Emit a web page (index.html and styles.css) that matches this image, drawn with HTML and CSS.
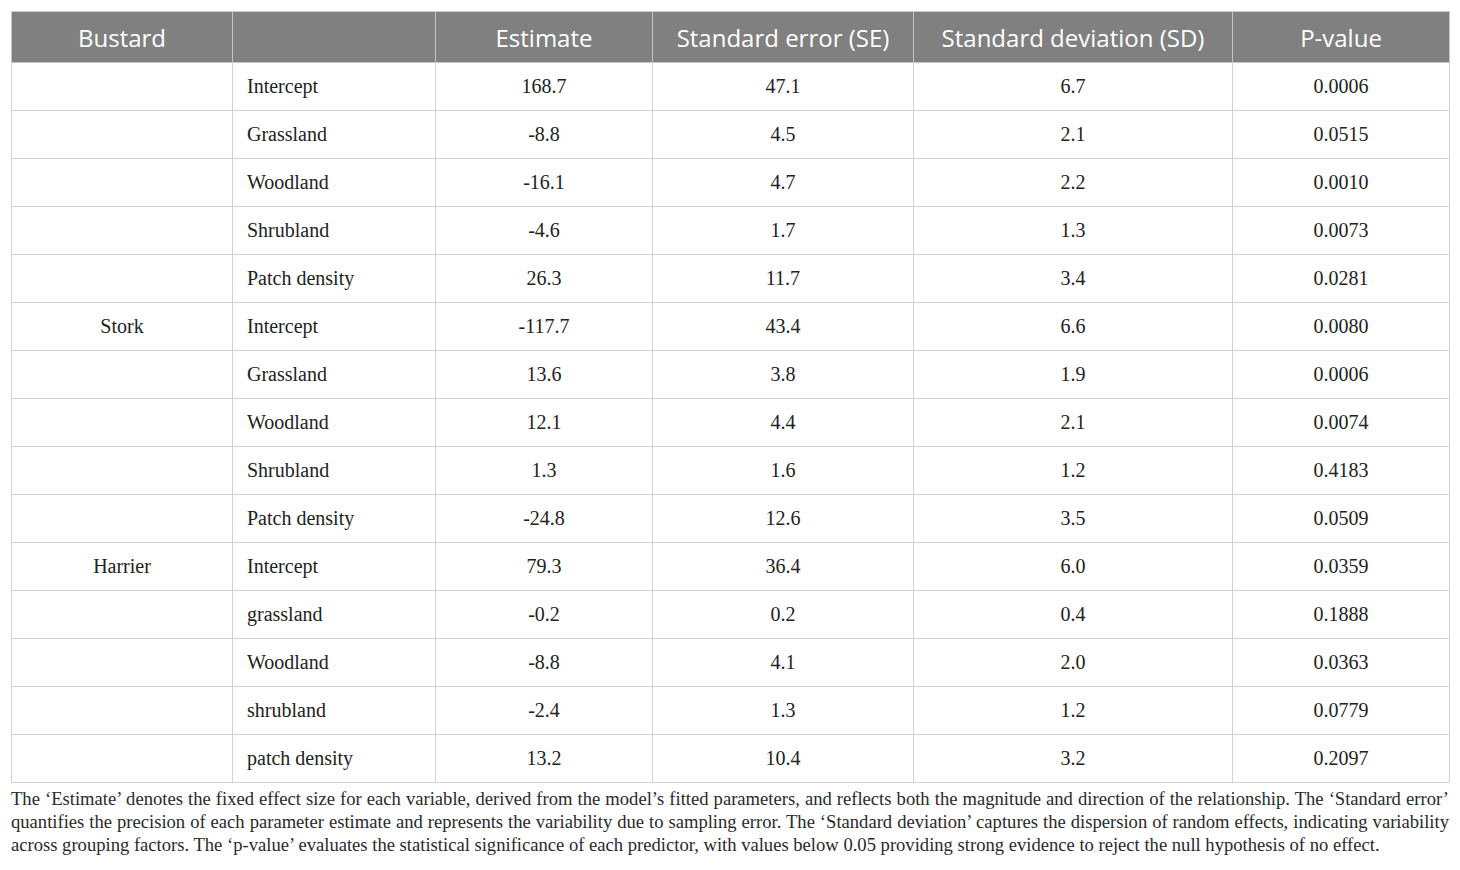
FILE: index.html
```html
<!DOCTYPE html>
<html lang="en">
<head>
    <meta charset="UTF-8">
    <title>Bustard, Stork and Harrier model estimates</title>
    <link rel="stylesheet" href="styles.css">
</head>
<body>
    <table class="results">
        <colgroup>
            <col class="col-species">
            <col class="col-var">
            <col class="col-est">
            <col class="col-se">
            <col class="col-sd">
            <col class="col-p">
        </colgroup>
        <thead>
            <tr>
                <th>Bustard</th>
                <th></th>
                <th>Estimate</th>
                <th>Standard error (SE)</th>
                <th>Standard deviation (SD)</th>
                <th>P-value</th>
            </tr>
        </thead>
        <tbody>
            <tr><td></td><td class="var">Intercept</td><td>168.7</td><td>47.1</td><td>6.7</td><td>0.0006</td></tr>
            <tr><td></td><td class="var">Grassland</td><td>-8.8</td><td>4.5</td><td>2.1</td><td>0.0515</td></tr>
            <tr><td></td><td class="var">Woodland</td><td>-16.1</td><td>4.7</td><td>2.2</td><td>0.0010</td></tr>
            <tr><td></td><td class="var">Shrubland</td><td>-4.6</td><td>1.7</td><td>1.3</td><td>0.0073</td></tr>
            <tr><td></td><td class="var">Patch density</td><td>26.3</td><td>11.7</td><td>3.4</td><td>0.0281</td></tr>
            <tr><td>Stork</td><td class="var">Intercept</td><td>-117.7</td><td>43.4</td><td>6.6</td><td>0.0080</td></tr>
            <tr><td></td><td class="var">Grassland</td><td>13.6</td><td>3.8</td><td>1.9</td><td>0.0006</td></tr>
            <tr><td></td><td class="var">Woodland</td><td>12.1</td><td>4.4</td><td>2.1</td><td>0.0074</td></tr>
            <tr><td></td><td class="var">Shrubland</td><td>1.3</td><td>1.6</td><td>1.2</td><td>0.4183</td></tr>
            <tr><td></td><td class="var">Patch density</td><td>-24.8</td><td>12.6</td><td>3.5</td><td>0.0509</td></tr>
            <tr><td>Harrier</td><td class="var">Intercept</td><td>79.3</td><td>36.4</td><td>6.0</td><td>0.0359</td></tr>
            <tr><td></td><td class="var">grassland</td><td>-0.2</td><td>0.2</td><td>0.4</td><td>0.1888</td></tr>
            <tr><td></td><td class="var">Woodland</td><td>-8.8</td><td>4.1</td><td>2.0</td><td>0.0363</td></tr>
            <tr><td></td><td class="var">shrubland</td><td>-2.4</td><td>1.3</td><td>1.2</td><td>0.0779</td></tr>
            <tr><td></td><td class="var">patch density</td><td>13.2</td><td>10.4</td><td>3.2</td><td>0.2097</td></tr>
        </tbody>
    </table>

    <p class="note">The ‘Estimate’ denotes the fixed effect size for each variable, derived from the model’s fitted parameters, and reflects both the magnitude and direction of the relationship. The ‘Standard error’ quantifies the precision of each parameter estimate and represents the variability due to sampling error. The ‘Standard deviation’ captures the dispersion of random effects, indicating variability across grouping factors. The ‘p-value’ evaluates the statistical significance of each predictor, with values below 0.05 providing strong evidence to reject the null hypothesis of no effect.</p>
</body>
</html>
```

FILE: styles.css
```css
body {
    margin: 0;
    padding: 11px 11px 0 11px;
    background: #fff;
    color: #222;
    font-family: "Liberation Serif", "Times New Roman", serif;
}

.results {
    width: 1438px;
    border-collapse: collapse;
    table-layout: fixed;
}

.col-species { width: 221px; }
.col-var { width: 203px; }
.col-est { width: 217px; }
.col-se { width: 261px; }
.col-sd { width: 319px; }
.col-p { width: 217px; }

.results th {
    background-color: #808080;
    color: #fff;
    font-family: "Open Sans", "Noto Sans", sans-serif;
    font-weight: normal;
    font-size: 24px;
    height: 50px;
    padding: 0 6px;
    text-align: center;
    border: 1px solid #c4c4c4;
    border-top-color: #d0d0d0;
}

.results td {
    height: 47px;
    padding: 0 14px;
    font-size: 20px;
    text-align: center;
    border: 1px solid #d2d2d2;
    color: #222;
}

.results td.var {
    text-align: left;
}

.note {
    margin: 4px 0 0 0;
    font-size: 18.6px;
    line-height: 23px;
    text-align: justify;
    color: #2a2a2a;
}
```
